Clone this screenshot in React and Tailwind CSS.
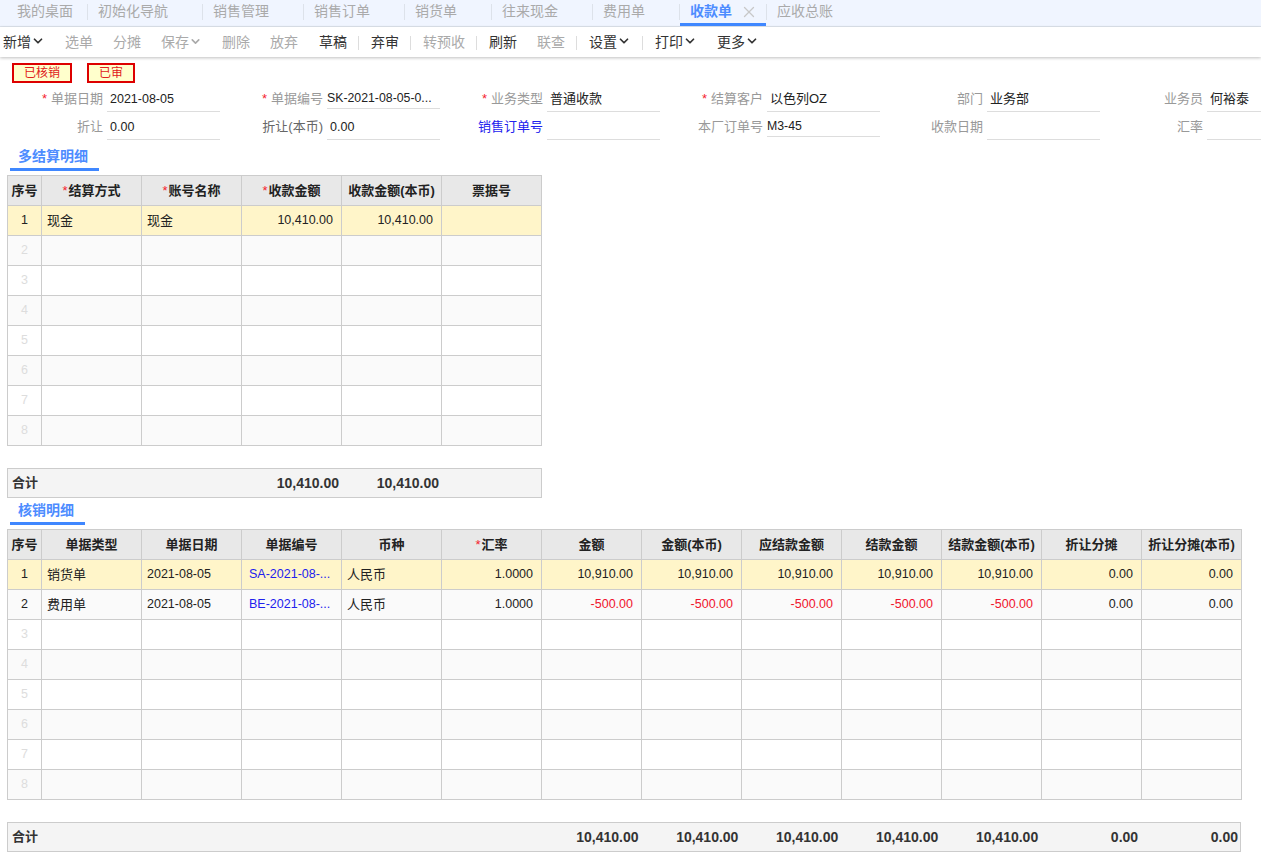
import React from "react";
import { ChevronDown, X } from "lucide-react";

const tabs = ["我的桌面", "初始化导航", "销售管理", "销售订单", "销货单", "往来现金", "费用单", "收款单", "应收总账"];

const tools = [
  { t: "新增", dark: true, chev: 14 },
  { t: "选单" },
  { t: "分摊" },
  { t: "保存", chev: 13 },
  { t: "删除" },
  { t: "放弃", wide: true },
  { t: "草稿", dark: true, sep: true },
  { t: "弃审", dark: true, sep: true },
  { t: "转预收", sep: true },
  { t: "刷新", dark: true },
  { t: "联查", sep: true },
  { t: "设置", dark: true, chev: 14, sep: true },
  { t: "打印", dark: true, chev: 14 },
  { t: "更多", dark: true, chev: 14 },
];

const fields = [
  { label: "单据日期", req: true, value: "2021-08-05", num: true },
  { label: "单据编号", req: true, value: "SK-2021-08-05-0...", short: true },
  { label: "业务类型", req: true, value: "普通收款" },
  { label: "结算客户", req: true, value: "以色列OZ" },
  { label: "部门", value: "业务部" },
  { label: "业务员", value: "何裕泰" },
  { label: "折让", value: "0.00", num: true },
  { label: "折让(本币)", value: "0.00", num: true, darkLabel: true },
  { label: "销售订单号", value: "", link: true },
  { label: "本厂订单号", value: "M3-45", short: true },
  { label: "收款日期", value: "" },
  { label: "汇率", value: "" },
];

const cols1 = [
  { h: "序号" },
  { h: "结算方式", req: true },
  { h: "账号名称", req: true },
  { h: "收款金额", req: true },
  { h: "收款金额(本币)" },
  { h: "票据号" },
];

const rows1 = [[{ v: "现金" }, { v: "现金" }, { v: "10,410.00", r: true }, { v: "10,410.00", r: true }, { v: "" }]];

const cols2 = [
  { h: "序号" },
  { h: "单据类型" },
  { h: "单据日期" },
  { h: "单据编号" },
  { h: "币种" },
  { h: "汇率", req: true },
  { h: "金额" },
  { h: "金额(本币)" },
  { h: "应结款金额" },
  { h: "结款金额" },
  { h: "结款金额(本币)" },
  { h: "折让分摊" },
  { h: "折让分摊(本币)" },
];

const rows2 = [
  [
    { v: "销货单" },
    { v: "2021-08-05" },
    { v: "SA-2021-08-...", link: true },
    { v: "人民币" },
    { v: "1.0000", r: true },
    { v: "10,910.00", r: true },
    { v: "10,910.00", r: true },
    { v: "10,910.00", r: true },
    { v: "10,910.00", r: true },
    { v: "10,910.00", r: true },
    { v: "0.00", r: true },
    { v: "0.00", r: true },
  ],
  [
    { v: "费用单" },
    { v: "2021-08-05" },
    { v: "BE-2021-08-...", link: true },
    { v: "人民币" },
    { v: "1.0000", r: true },
    { v: "-500.00", r: true, red: true },
    { v: "-500.00", r: true, red: true },
    { v: "-500.00", r: true, red: true },
    { v: "-500.00", r: true, red: true },
    { v: "-500.00", r: true, red: true },
    { v: "0.00", r: true },
    { v: "0.00", r: true },
  ],
];

const Star = () => <span className="mr-px font-normal text-[#f5222d]">*</span>;

const GridTable = ({ cols, rows }) => {
  const blank = Array.from({ length: 8 }, (_, i) => i);
  return (
    <table className="ml-[7px] table-fixed border-collapse text-[13px] text-[#222]">
      <colgroup>
        {cols.map((c, i) => (
          <col key={c.h} className={i === 0 ? "w-[34px]" : "w-[100px]"} />
        ))}
      </colgroup>
      <thead>
        <tr className="h-[30px] bg-[#e8e8e8]">
          {cols.map((c) => (
            <th key={c.h} className="overflow-hidden whitespace-nowrap border border-[#ccc] p-0 text-center font-bold">
              {c.req && <Star />}
              {c.h}
            </th>
          ))}
        </tr>
      </thead>
      <tbody>
        {blank.map((i) => {
          const row = rows[i];
          const bg = i === 0 ? "bg-[#fff5c9]" : i % 2 === 1 ? "bg-[#fafafa]" : "bg-white";
          return (
            <tr key={i} className={`h-[30px] ${bg}`}>
              <td className={`border border-[#ccc] p-0 text-center text-[12.5px] ${row ? "text-[#222]" : "text-[#ddd]"}`}>{i + 1}</td>
              {cols.slice(1).map((c, j) => {
                const cell = row ? row[j] : null;
                if (!cell) return <td key={c.h} className="border border-[#ccc] p-0" />;
                if (cell.link) {
                  return (
                    <td key={c.h} className="overflow-hidden whitespace-nowrap border border-[#ccc] p-0 pl-[7px] text-[12.5px] text-[#2222ee]">
                      {cell.v}
                    </td>
                  );
                }
                if (cell.r) {
                  return (
                    <td key={c.h} className={`overflow-hidden whitespace-nowrap border border-[#ccc] p-0 pr-[8px] text-right text-[12.5px] ${cell.red ? "text-[#f0142d]" : ""}`}>
                      {cell.v}
                    </td>
                  );
                }
                return (
                  <td key={c.h} className={`overflow-hidden whitespace-nowrap border border-[#ccc] p-0 pl-[5px] ${/^\d/.test(cell.v) ? "text-[12.5px]" : ""}`}>
                    {cell.v}
                  </td>
                );
              })}
            </tr>
          );
        })}
      </tbody>
    </table>
  );
};

const Totals = ({ className, values }) => (
  <div className={`ml-[7px] flex h-[30px] items-center border border-[#ccc] bg-[#f4f4f4] text-[14px] font-bold text-[#333] ${className}`}>
    <div className="w-[33px] pl-[4px] text-[13px]">合计</div>
    {values.map((v, i) => (
      <div key={i} className="w-[100px] whitespace-nowrap pr-[2px] text-right">
        {v}
      </div>
    ))}
  </div>
);

const SectionTab = ({ title, className }) => (
  <div className={`mb-[4px] flex pl-[10px] ${className}`}>
    <div className="border-b-[3px] border-[#3f87ff] pb-[4px] pl-[8px] pr-[11px] text-[14px] font-bold leading-[16px] text-[#4d8cff]">{title}</div>
  </div>
);

export default function App() {
  return (
    <div
      className="h-[861px] w-[1261px] overflow-hidden bg-white"
      style={{ fontFamily: '"Liberation Sans", "Noto Sans CJK SC", sans-serif' }}
    >
      {/* top tabs */}
      <div className="flex h-[27px] items-start border-b border-[#dfe5ee] bg-[#f0f5ff] pl-[7px] text-[14px] text-[#aaa]">
        {tabs.map((t, i) => {
          const active = t === "收款单";
          return (
            <React.Fragment key={t}>
              <div
                className={`flex h-[26px] items-center border-b-[3px] pl-[10px] ${
                  active ? "border-[#3f87ff] pr-[8px] font-bold text-[#4d8cff]" : i === 0 ? "border-transparent pr-[14px]" : "border-transparent pr-[34px]"
                }`}
              >
                {t}
                {active && <X size={18} strokeWidth={1.75} className="ml-[8px] text-[#c8c8c8]" />}
              </div>
              {i < tabs.length - 1 && <span className="mt-[4px] h-[16px] w-px bg-[#dde2ea]" />}
            </React.Fragment>
          );
        })}
      </div>

      {/* toolbar */}
      <div className="flex h-[30px] items-center pl-[3px] text-[14px] shadow-[0_1px_3px_rgba(0,0,0,0.25)]">
        {tools.map((b) => (
          <React.Fragment key={b.t}>
            <div className={`flex items-center whitespace-nowrap ${b.wide ? "mr-[21px]" : "mr-5"} ${b.dark ? "text-[#333]" : "text-[#aaa]"}`}>
              {b.t}
              {b.chev && <ChevronDown size={b.chev} strokeWidth={3} className="-mt-[2px]" />}
            </div>
            {b.sep && <span className="-ml-[9px] mr-3 mt-px h-[14px] w-px bg-[#ddd]" />}
          </React.Fragment>
        ))}
      </div>

      {/* status badges */}
      <div className="flex gap-[15px] pl-[12px] pt-[6px]">
        <div className="flex h-[20px] w-[60px] items-center justify-center border-2 border-[#dd0000] bg-[#ffffcc] text-[12px] text-[#e02020]">已核销</div>
        <div className="flex h-[20px] w-[48px] items-center justify-center border-2 border-[#dd0000] bg-[#ffffcc] text-[12px] text-[#e02020]">已审</div>
      </div>

      {/* form */}
      <div className="mt-px grid w-[1320px] grid-cols-[repeat(6,220px)] text-[13px]">
        {fields.map((f) => (
          <div key={f.label} className="flex h-[28px] items-start">
            <div
              className={`w-[103px] whitespace-nowrap pt-[6px] text-right leading-[18px] ${
                f.link ? "text-[#2222ee]" : f.darkLabel ? "text-[#666]" : "text-[#999]"
              }`}
            >
              {f.req && <span className="mr-[4px] text-[#f5222d]">*</span>}
              {f.label}
            </div>
            <div
              className={`ml-[4px] w-[113px] overflow-hidden whitespace-nowrap border-b border-[#ddd] leading-[18px] text-[#222] ${
                f.short ? "h-[25px] pt-[5px] text-[12.3px]" : "h-[28px] pl-[3px] pt-[6px]"
              } ${f.num ? "text-[12.5px]" : ""}`}
            >
              {f.value}
            </div>
          </div>
        ))}
      </div>

      <SectionTab title="多结算明细" className="mt-[8px]" />
      <GridTable cols={cols1} rows={rows1} />
      <div className="mt-[22px]">
        <Totals className="w-[535px]" values={["", "", "10,410.00", "10,410.00", ""]} />
      </div>
      <SectionTab title="核销明细" className="mt-[4px]" />
      <GridTable cols={cols2} rows={rows2} />
      <div className="mt-[22px]">
        <Totals
          className="w-[1234px]"
          values={["", "", "", "", "", "10,410.00", "10,410.00", "10,410.00", "10,410.00", "10,410.00", "0.00", "0.00"]}
        />
      </div>
    </div>
  );
}
